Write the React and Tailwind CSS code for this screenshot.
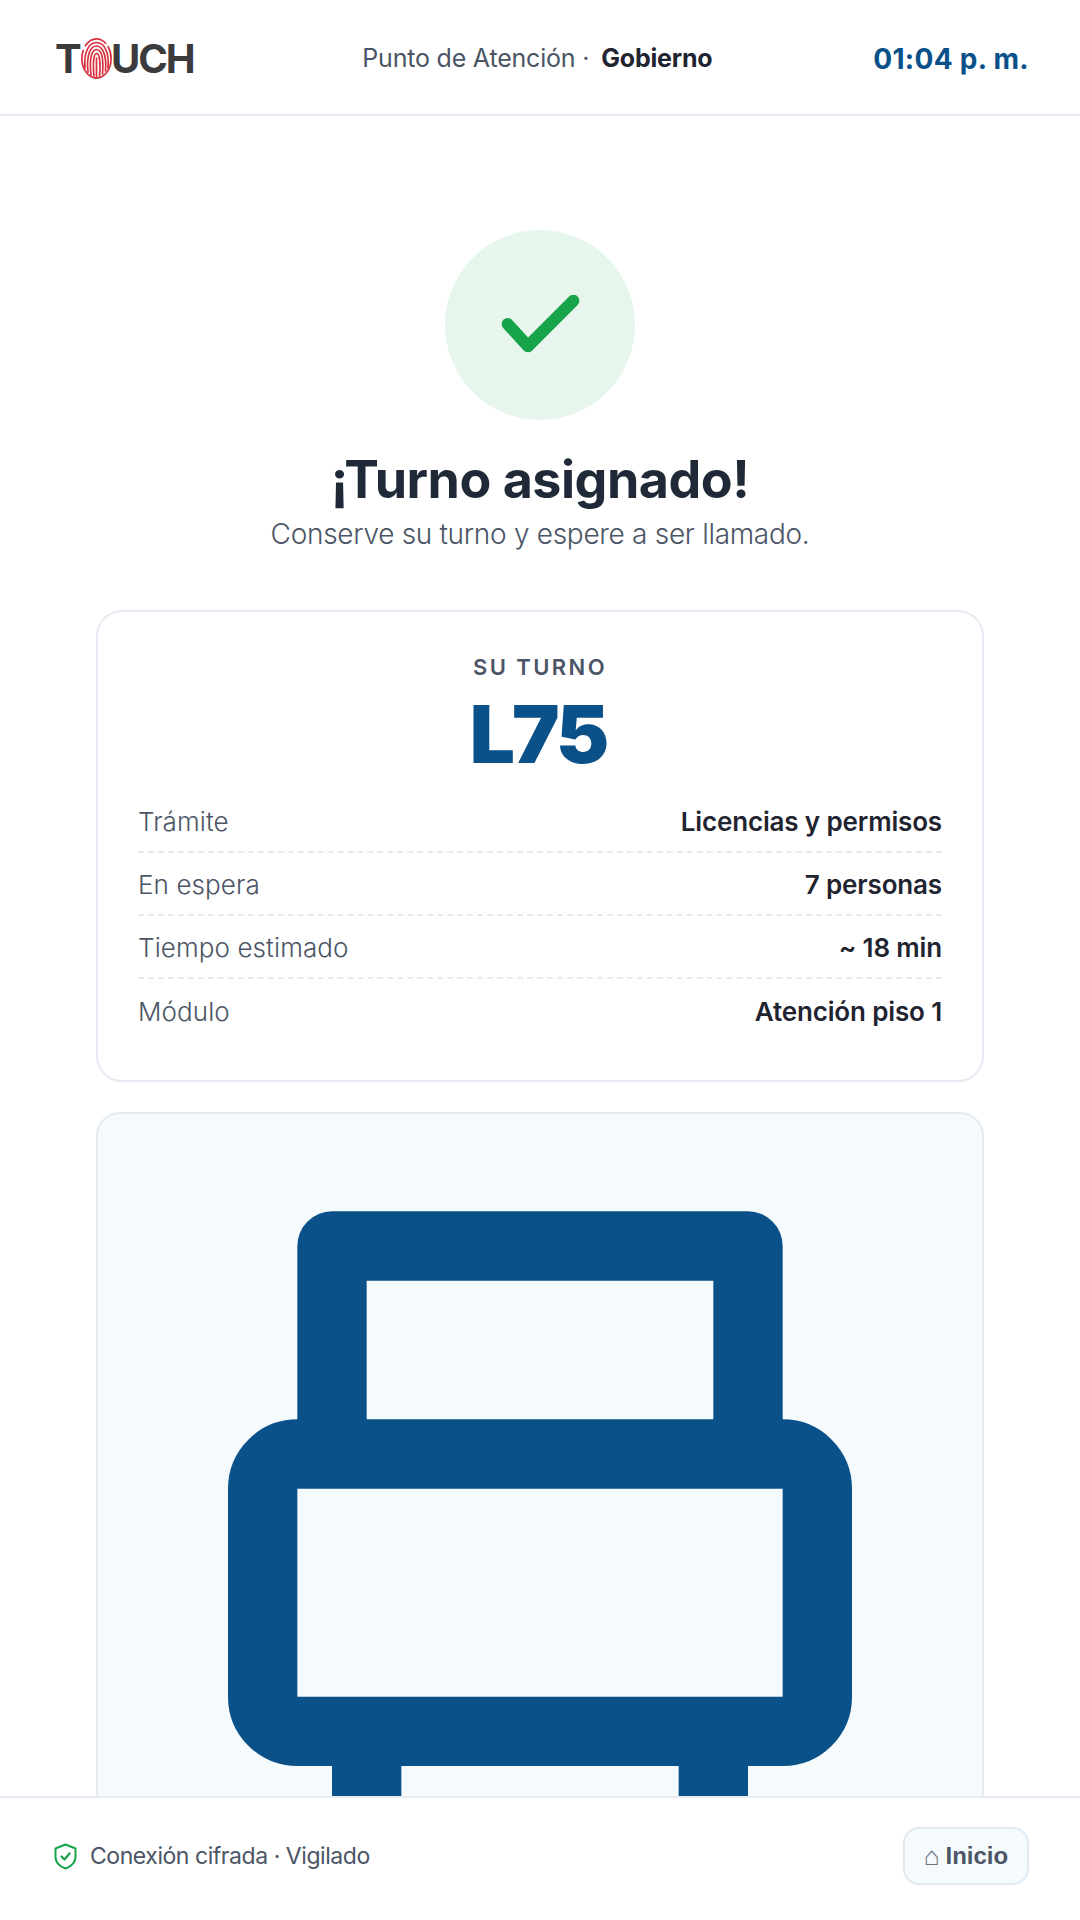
const rows = [
  { label: "Trámite", value: "Licencias y permisos" },
  { label: "En espera", value: "7 personas" },
  { label: "Tiempo estimado", value: "~ 18 min" },
  { label: "Módulo", value: "Atención piso 1" },
];

function Fingerprint() {
  return (
    <svg viewBox="0 0 31 41" className="w-[31px] h-[41px] shrink-0" fill="none" stroke="#d8323f" strokeWidth="1.7" strokeLinecap="round">
      <ellipse cx="15.5" cy="20.5" rx="14.6" ry="19.6" strokeDasharray="62 5 24 4" />
      <path d="M4 30C2.5 14 8 4.5 15.5 4.5S28.5 14 27 30" />
      <path d="M7 34C5 16 10 8 15.5 8S26 16 24.5 33" />
      <path d="M10 37C8 20 11 11.5 15.5 11.5S23 18 21.5 36" />
      <path d="M13 38C11.5 24 13 15.5 15.5 15.5S20 22 18.5 38" />
      <path d="M15.5 20V39" />
    </svg>
  );
}

function Logo() {
  return (
    <div className="flex items-center font-['Inter',sans-serif] font-bold text-[40px] leading-none text-[#3b3b3d] tracking-[-2.1px]">
      <span className="w-[26px]">T</span>
      <Fingerprint />
      <span className="ml-[-1px]">UCH</span>
    </div>
  );
}

function BigPrinter() {
  return (
    <svg viewBox="0 0 24 24" className="w-full block" fill="none" stroke="#0a5089" strokeWidth="2" strokeLinejoin="round">
      <path d="M6 9V3h12v6" />
      <path d="M5 9h14a1 1 0 0 1 1 1v6a1 1 0 0 1-1 1H5a1 1 0 0 1-1-1v-6a1 1 0 0 1 1-1z" />
      <path d="M7 17v4h10v-4" />
    </svg>
  );
}

export default function App() {
  return (
    <div className="w-[1080px] h-[1920px] bg-white flex flex-col overflow-hidden font-['Inter',sans-serif]">
      {/* Header */}
      <header className="h-[116px] shrink-0 border-b-2 border-[#e6eaf2] pl-[55px] pr-[51px] pt-[3px] flex items-center justify-between">
        <Logo />
        <div className="flex items-center gap-[12px] text-[25px] tracking-[-0.2px] ml-[8px]">
          <span className="text-[#4b5565]">Punto de Atención ·</span>
          <span className="font-bold text-[#1f2430]">Gobierno</span>
        </div>
        <span className="text-[28px] font-bold tracking-[0.3px] text-[#0a5089]">01:04 p. m.</span>
      </header>

      {/* Contenido */}
      <main className="flex-1 min-h-0 overflow-hidden px-[96px] pt-[114px] flex flex-col items-center">
        <div className="w-[190px] h-[190px] rounded-full bg-[#e7f6ed] flex items-center justify-center shrink-0">
          <svg viewBox="0 0 80 60" className="w-[79px] h-[58px] mt-[-2px]" fill="none" stroke="#16a34a" strokeWidth="12.5" strokeLinecap="round" strokeLinejoin="round">
            <path d="M6 30L27 53L74 6" />
          </svg>
        </div>

        <h1 className="mt-[28px] text-[52px] leading-[64px] font-bold text-[#1f2937] tracking-[-0.5px]">¡Turno asignado!</h1>
        <p className="mt-[3px] text-[28px] leading-[38px] font-light text-[#4b5565] tracking-[-0.3px]">Conserve su turno y espere a ser llamado.</p>

        <section className="mt-[57px] w-full shrink-0 rounded-[26px] border-2 border-[#e6eaf2] px-[40px] pt-[40px] pb-[38px]">
          <div className="text-center text-[22px] leading-[30px] font-semibold tracking-[2.4px] text-[#4b5565]">SU TURNO</div>
          <div className="mt-[8px] pr-[4px] text-center text-[80px] leading-[88px] font-black tracking-[-3px] text-[#0a5089]">L75</div>
          <div className="mt-[12px] flex flex-col">
            {rows.map((row, i) => (
              <div
                key={row.label}
                className={`h-[63px] pt-[2px] flex items-center justify-between text-[26px] ${i < rows.length - 1 ? "border-b-2 border-dashed border-[#e6eaf2]" : ""}`}
              >
                <span className="font-light tracking-[0.1px] text-[#4b5565]">{row.label}</span>
                <span className="font-semibold tracking-[-0.15px] text-[#1f2430]">{row.value}</span>
              </div>
            ))}
          </div>
        </section>

        <section className="mt-[30px] w-full shrink-0 rounded-[24px] border-2 border-[#e6eaf2] bg-[#f5fafd] px-[26px] pt-[28px]">
          <BigPrinter />
        </section>
      </main>

      {/* Footer */}
      <footer className="h-[124px] shrink-0 border-t-2 border-[#e6eaf2] bg-white pl-[54px] pr-[51px] pb-[6px] flex items-center justify-between">
        <div className="flex items-center gap-[13px]">
          <svg viewBox="0 0 23 27" className="w-[23px] h-[27px]" fill="none" stroke="#16a34a" strokeWidth="2" strokeLinejoin="round" strokeLinecap="round">
            <path d="M11.5 1.5L21.5 5.5V14C21.5 19.5 17 23.5 11.5 25.5C6 23.5 1.5 19.5 1.5 14V5.5Z" />
            <path d="M7.5 13.5L10.5 16.5L15.5 10.5" strokeWidth="2.2" />
          </svg>
          <span className="text-[23px] text-[#4b5565] tracking-[-0.45px]">Conexión cifrada · Vigilado</span>
        </div>
        <button className="w-[126px] h-[58px] rounded-[16px] border-2 border-[#e2e8f2] bg-[#f5fafd] text-[#4b5565] flex items-center justify-center gap-[6px]">
          <span className="font-['DejaVu_Sans',sans-serif] font-light text-[#6b7280] text-[26px] leading-none">⌂</span>
          <span className="font-['Liberation_Sans',sans-serif] font-bold text-[24px]">Inicio</span>
        </button>
      </footer>
    </div>
  );
}
